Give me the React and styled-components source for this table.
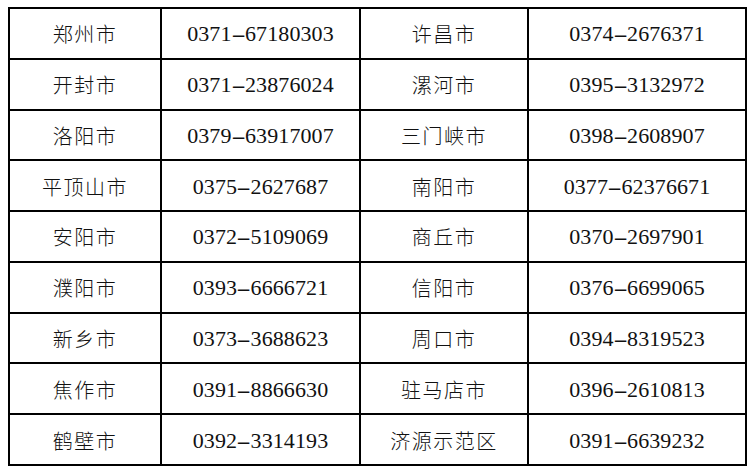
import React from "react";
import styled, { createGlobalStyle } from "styled-components";

const Global = createGlobalStyle`
  html, body { margin: 0; padding: 0; background: #fff; }
  body { padding: 7px 0 0 8px; }
`;

const Table = styled.div`
  display: grid;
  grid-template-columns: 150px 197px 166px 216px;
  grid-template-rows: repeat(9, 1fr);
  gap: 2px;
  padding: 2px;
  width: 739px;
  height: 459px;
  box-sizing: border-box;
  background: #000;
`;

const Cell = styled.div`
  background: #fff;
  display: flex;
  align-items: center;
  justify-content: center;
  color: #111;
  padding-top: ${(p) => (p.$num ? "2px" : "1px")};
  font-family: ${(p) =>
    p.$num
      ? '"Liberation Serif", serif'
      : '"Noto Sans CJK SC", sans-serif'};
  font-size: ${(p) => (p.$num ? "22px" : "20px")};
  font-weight: ${(p) => (p.$num ? 400 : 300)};
  letter-spacing: ${(p) => (p.$num ? "0.1px" : "1.5px")};
`;

const Dash = styled.span`
  display: inline-block;
  transform: scaleX(2);
  margin: 0 3px;
`;

const Phone = ({ value }) => {
  const [a, b] = value.split("-");
  return (
    <>
      {a}
      <Dash>-</Dash>
      {b}
    </>
  );
};

const rows = [
  ["郑州市", "0371-67180303", "许昌市", "0374-2676371"],
  ["开封市", "0371-23876024", "漯河市", "0395-3132972"],
  ["洛阳市", "0379-63917007", "三门峡市", "0398-2608907"],
  ["平顶山市", "0375-2627687", "南阳市", "0377-62376671"],
  ["安阳市", "0372-5109069", "商丘市", "0370-2697901"],
  ["濮阳市", "0393-6666721", "信阳市", "0376-6699065"],
  ["新乡市", "0373-3688623", "周口市", "0394-8319523"],
  ["焦作市", "0391-8866630", "驻马店市", "0396-2610813"],
  ["鹤壁市", "0392-3314193", "济源示范区", "0391-6639232"],
];

export default function App() {
  return (
    <>
      <Global />
      <Table>
        {rows.map((r, i) =>
          r.map((t, j) => {
            const num = j % 2 === 1;
            return (
              <Cell key={`${i}-${j}`} $num={num}>
                {num ? <Phone value={t} /> : t}
              </Cell>
            );
          })
        )}
      </Table>
    </>
  );
}
